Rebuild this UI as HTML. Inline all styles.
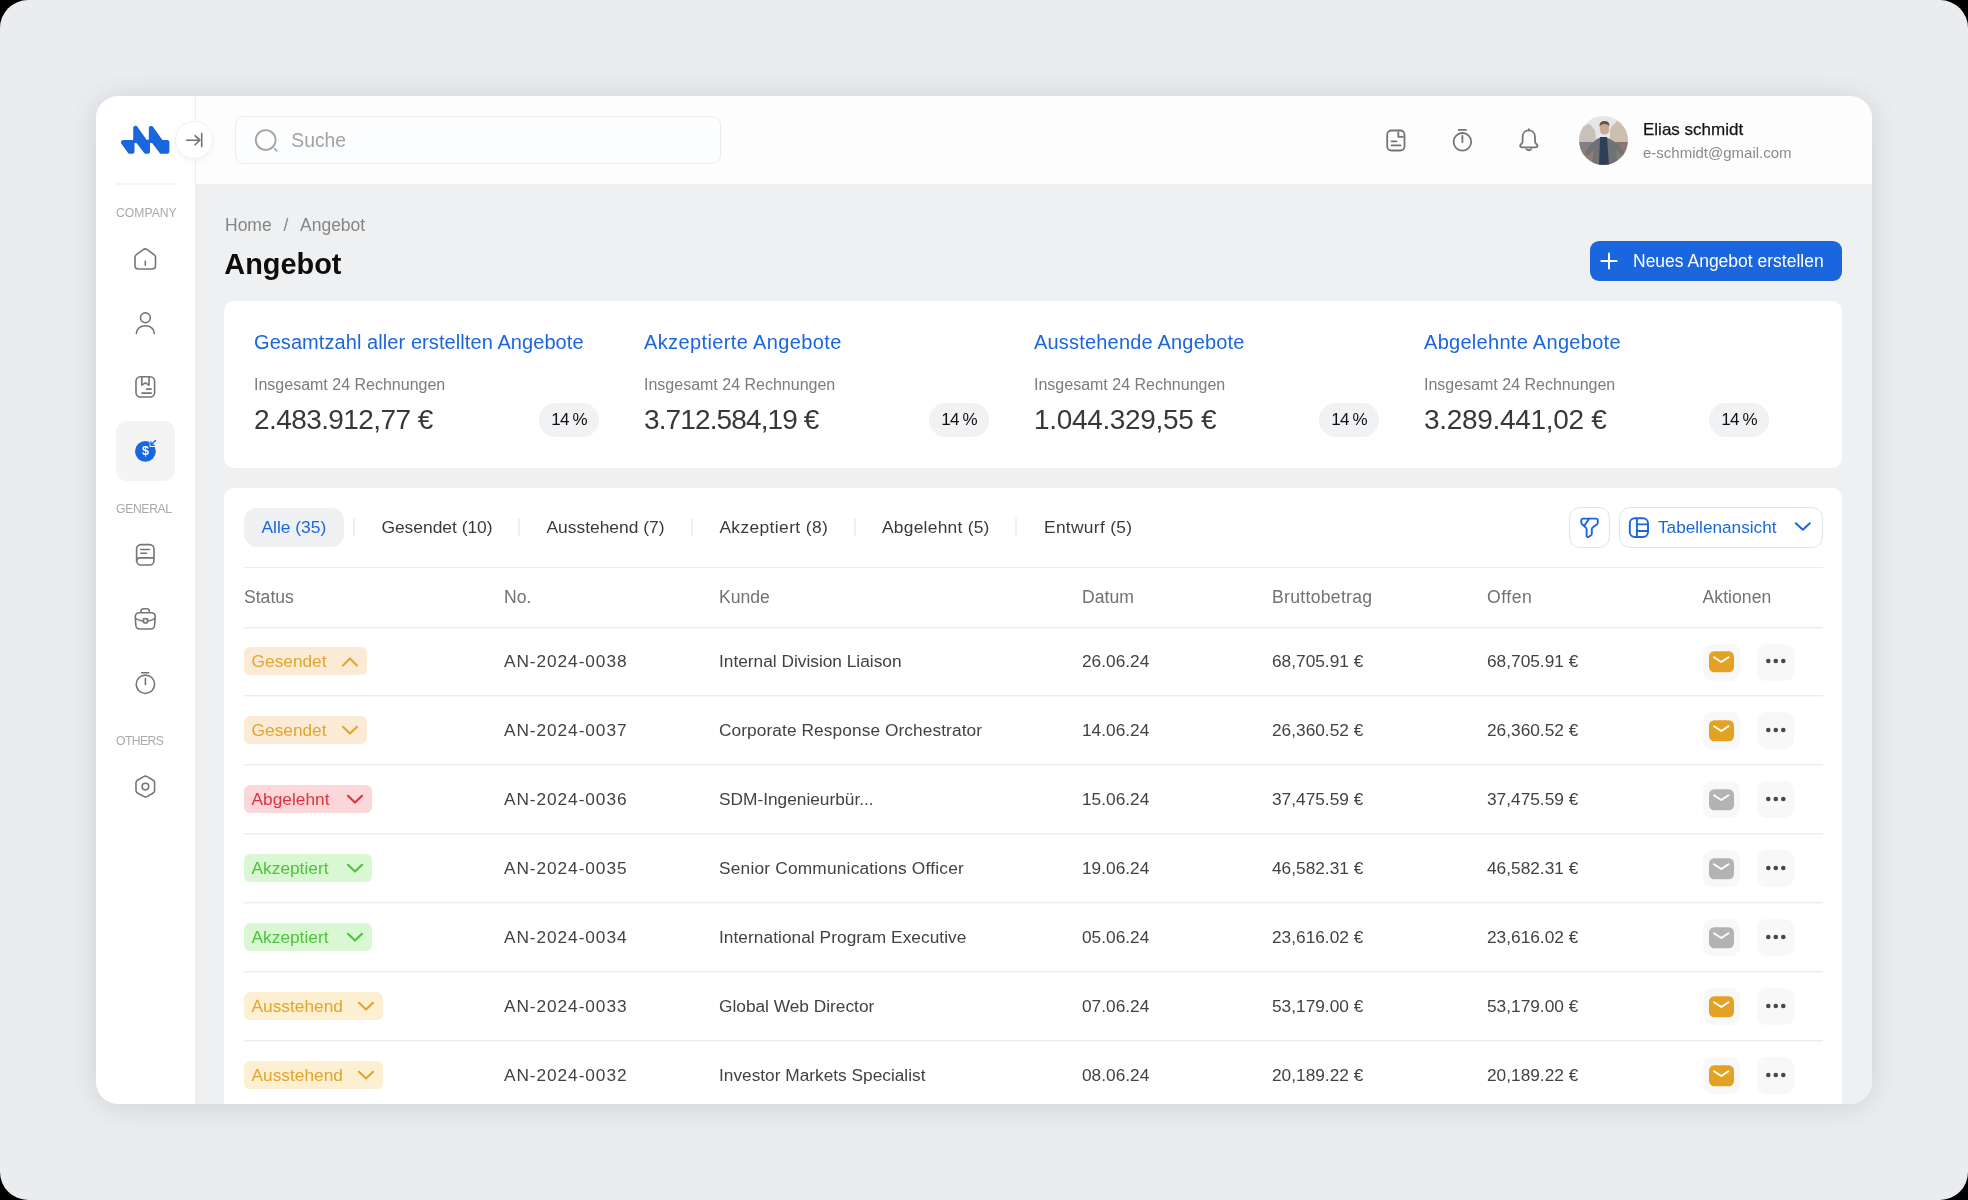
<!DOCTYPE html>
<html><head><meta charset="utf-8"><style>
html,body{margin:0;padding:0;width:1968px;height:1200px;overflow:hidden;background:#000;}
#frame{position:absolute;left:0;top:0;width:1968px;height:1200px;border-radius:28px;background:#ebecef;overflow:hidden;}
#card{position:absolute;left:96px;top:96px;width:1776px;height:1008px;border-radius:22px;overflow:hidden;box-shadow:0 0 28px rgba(20,25,40,0.07),0 6px 40px rgba(20,25,40,0.05);}
#clip{position:absolute;left:96px;top:96px;width:1776px;height:1008px;border-radius:22px;overflow:hidden;}
#inner{will-change:transform;position:absolute;left:-96px;top:-96px;width:1968px;height:1200px;}
.t{position:absolute;white-space:nowrap;line-height:1;font-family:"Liberation Sans", sans-serif;}
</style></head><body><div id="frame">
<div id="card"><div style="position:absolute;left:0px;top:0px;width:99px;height:1008px;background:#ffffff;"></div><div style="position:absolute;left:99px;top:0px;width:1677px;height:88px;background:#fdfdfe;"></div><div style="position:absolute;left:99px;top:88px;width:1677px;height:920px;background:#eff0f2;"></div><div style="position:absolute;left:99px;top:0px;width:1px;height:1008px;background:#eeeff1;"></div></div>
<div id="clip"><div id="inner">
<svg style="position:absolute;left:116px;top:120px" width="60" height="40" viewBox="0 0 60 40" fill="none"><path d="M7.27 20.00L6.34 20.19L5.63 20.67L5.34 21.02L5.13 21.43L4.99 21.92L5.01 22.77L5.14 23.21L5.39 23.64L11.90 32.82L12.52 33.42L13.32 33.75L16.19 33.80L16.68 33.75L17.50 33.39L18.13 32.75L18.45 31.98L18.50 31.49L18.50 23.57L18.55 23.33L18.70 23.13L18.91 23.00L19.16 22.98L20.21 23.00L20.47 23.06L20.68 23.23L28.20 32.90L28.81 33.45L29.58 33.75L31.69 33.80L32.55 33.63L33.30 33.15L33.81 32.41L34.00 31.49L34.00 23.57L34.05 23.33L34.20 23.13L34.41 23.00L34.66 22.97L35.80 23.00L36.07 23.06L36.28 23.24L43.50 32.87L43.82 33.21L44.49 33.63L45.36 33.80L51.52 33.76L52.01 33.61L52.70 33.15L53.03 32.75L53.35 31.98L53.40 31.49L53.40 22.31L53.23 21.45L52.99 21.00L52.35 20.37L51.52 20.04L46.71 20.00L46.43 19.93L46.22 19.75L36.98 6.81L36.35 6.21L35.53 5.88L34.64 5.89L33.82 6.23L33.20 6.85L32.85 7.67L32.80 19.23L32.75 19.47L32.60 19.67L32.39 19.80L30.91 19.80L30.64 19.73L30.42 19.55L21.37 6.68L20.71 6.07L20.31 5.87L19.50 5.72L18.62 5.89L17.88 6.39L17.39 7.12L17.24 7.60L17.20 19.43L17.15 19.67L17.00 19.87L16.79 20.00L16.54 20.02L7.27 20.00Z" fill="#1a66de"/></svg><div style="position:absolute;left:116px;top:183px;width:59px;height:2px;background:#f4f5f7;"></div><div style="position:absolute;left:175.3px;top:121.2px;width:38px;height:38px;border-radius:50%;background:#fff;border:1px solid #f0f0f2;box-shadow:0 2px 6px rgba(0,0,0,0.05);box-sizing:border-box"></div><svg style="position:absolute;left:182px;top:128px" width="24" height="24" viewBox="0 0 24 24" fill="none"><path d="M4.6 12.2 H17.8 M13.1 7.7 L17.8 12.2 L13.1 16.8 M19.7 5.6 V18.6" stroke="#707070" stroke-width="1.6" stroke-linecap="round" stroke-linejoin="round"/></svg><div style="position:absolute;left:235px;top:116px;width:486px;height:48px;border-radius:9px;border:1px solid #ebecee;background:#fcfdfe;box-sizing:border-box"></div><svg style="position:absolute;left:254px;top:128px" width="26" height="26" viewBox="0 0 26 26" fill="none"><circle cx="11.7" cy="12.0" r="9.9" stroke="#a4a4a4" stroke-width="1.8"/><path d="M20.6 20.9 L22.6 22.8" stroke="#a4a4a4" stroke-width="1.8" stroke-linecap="round"/></svg><div class="t" style="left:291.3px;top:130.56px;font-size:19.3px;color:#a3a3a3;font-weight:normal;">Suche</div><svg style="position:absolute;left:1380px;top:124px" width="32" height="32" viewBox="0 0 32 32" fill="none"><rect x="7.2" y="6.5" width="17.3" height="20" rx="4.2" stroke="#757575" stroke-width="1.8"/><path d="M18.3 8.2 V12.8 H22.9 M11.5 17.3 H16.5 M11.5 21.4 H20.6" stroke="#757575" stroke-width="1.8" stroke-linecap="round" stroke-linejoin="round"/></svg><svg style="position:absolute;left:1446px;top:124px" width="32" height="32" viewBox="0 0 32 32" fill="none"><circle cx="16.4" cy="17.8" r="8.8" stroke="#757575" stroke-width="1.8"/><path d="M12.7 5.9 H20 M16.4 11.8 V18.2" stroke="#757575" stroke-width="1.8" stroke-linecap="round"/></svg><svg style="position:absolute;left:1513px;top:124px" width="32" height="32" viewBox="0 0 32 32" fill="none"><path d="M15.8 6.4 C11.9 6.4 9.6 9.4 9.6 13.1 V17.4 C9.6 19 8.3 19.9 7.5 20.9 C6.7 21.9 7.3 23.3 8.7 23.3 H22.9 C24.3 23.3 24.9 21.9 24.1 20.9 C23.3 19.9 22 19 22 17.4 V13.1 C22 9.4 19.7 6.4 15.8 6.4 Z" stroke="#757575" stroke-width="1.8" stroke-linejoin="round"/><path d="M13.4 25.2 Q15.8 27.4 18.2 25.2 M15.8 5.2 V6.4" stroke="#757575" stroke-width="1.8" stroke-linecap="round"/></svg><svg style="position:absolute;left:1579px;top:116px" width="49" height="49" viewBox="0 0 49 49">
<defs><clipPath id="av"><circle cx="24.5" cy="24.5" r="24.5"/></clipPath><filter id="bl" x="-10%" y="-10%" width="120%" height="120%"><feGaussianBlur stdDeviation="0.6"/></filter></defs>
<g clip-path="url(#av)"><g filter="url(#bl)">
<rect x="0" y="0" width="49" height="49" fill="#e4e6e9"/>
<path d="M0 12 L6 10 L9 8 L12 9 L14 12 L16 14 L17 24 L17 30 L0 30 Z" fill="#c9c1b9"/>
<path d="M33 10 L38 5 L44 6 L49 8 L49 30 L31 30 L31 14 Z" fill="#cbc0ad"/>
<rect x="0" y="26" width="16" height="3" fill="#7c8088"/>
<rect x="34" y="26" width="15" height="4" fill="#8a7270"/>
<path d="M0 29 L16 29 L14 49 L0 49 Z" fill="#8b7d77"/>
<path d="M33 29 L49 29 L49 49 L35 49 Z" fill="#8a7b74"/>
<path d="M18 23 Q24 19 31 23 L39 28 L46 37 L44 40 L37 34 L39 49 L13 49 L15 34 L8 40 L6 37 L12 28 Z" fill="#6f7276"/>
<path d="M21 21 L28 21 L30 49 L20 49 Z" fill="#2f3f55"/>
<path d="M20.5 9.5 Q21 5.5 25.5 5.5 Q30 5.5 30 9.5 L30 15 Q29 18.5 25.5 18.5 Q22 18.5 21 15 Z" fill="#c9a896"/>
<path d="M20.5 10 Q20.5 5 25.5 5 Q30.5 5 30.5 10 Q28 7.8 25.5 8 Q23 7.8 20.5 10 Z" fill="#6a5240"/>
</g></g></svg><div class="t" style="left:1643px;top:121.21px;font-size:17px;color:#141414;font-weight:normal;-webkit-text-stroke:0.25px #141414;">Elias schmidt</div><div class="t" style="left:1643px;top:145.30px;font-size:15px;color:#8a8a8a;font-weight:normal;">e-schmidt@gmail.com</div><div class="t" style="left:116px;top:206.87px;font-size:12.2px;color:#aaaaaa;font-weight:normal;">COMPANY</div><div class="t" style="left:116px;top:503.07px;font-size:12.2px;color:#aaaaaa;font-weight:normal;letter-spacing:-0.35px;">GENERAL</div><div class="t" style="left:116px;top:734.87px;font-size:12.2px;color:#aaaaaa;font-weight:normal;letter-spacing:-0.6px;">OTHERS</div><svg style="position:absolute;left:130px;top:245px" width="30" height="30" viewBox="0 0 30 30" fill="none"><path d="M5 12.2 Q5 10.6 6.4 9.6 L13.2 4.6 Q15.2 3.2 17.2 4.6 L24 9.6 Q25.5 10.6 25.5 12.2 V20.5 Q25.5 24 22 24 H8.5 Q5 24 5 20.5 Z" stroke="#757575" stroke-width="1.6" stroke-linejoin="round"/><path d="M15.3 16.4 V20.2" stroke="#757575" stroke-width="1.6" stroke-linecap="round"/></svg><svg style="position:absolute;left:130px;top:308px" width="30" height="30" viewBox="0 0 30 30" fill="none"><circle cx="15.4" cy="9.8" r="4.9" stroke="#757575" stroke-width="1.6"/><path d="M6.4 25.6 C6.4 20.8 10.4 17.8 15.4 17.8 C20.4 17.8 24.2 20.8 24.2 25.6" stroke="#757575" stroke-width="1.6" stroke-linecap="round"/></svg><svg style="position:absolute;left:130px;top:372px" width="30" height="30" viewBox="0 0 30 30" fill="none"><rect x="6" y="4.8" width="18.6" height="20.2" rx="4.4" stroke="#757575" stroke-width="1.6"/><path d="M11.8 4.8 V13.2 L15.4 10.8 L19 13.2 V4.8" stroke="#757575" stroke-width="1.6" stroke-linejoin="round"/><path d="M16.6 17.1 H21.2 M11.9 21.1 H21.2" stroke="#757575" stroke-width="1.6" stroke-linecap="round"/></svg><div style="position:absolute;left:116px;top:421px;width:59px;height:60px;background:#f4f4f5;border-radius:11px;"></div><svg style="position:absolute;left:130px;top:436px" width="30" height="30" viewBox="0 0 30 30" fill="none"><circle cx="15.4" cy="15.3" r="10.4" fill="#1a66de"/><rect x="19.6" y="5.6" width="6" height="5.4" fill="#f4f4f5"/><path d="M25.5 4.6 L21.4 8.6 M21 6 V9.2 H24.2" stroke="#1a66de" stroke-width="1.4" stroke-linecap="round" stroke-linejoin="round"/><text x="15.5" y="19.0" text-anchor="middle" font-family="Liberation Sans" font-weight="bold" font-size="12.5" fill="#fff">$</text></svg><svg style="position:absolute;left:130px;top:540px" width="30" height="30" viewBox="0 0 30 30" fill="none"><rect x="6.6" y="4.6" width="17.4" height="20.4" rx="4.4" stroke="#757575" stroke-width="1.6"/><path d="M10.8 9.5 H19.5 M10.8 13.2 H16.5" stroke="#757575" stroke-width="1.6" stroke-linecap="round"/><path d="M6.6 21.5 Q6.6 17.9 10.2 17.9 H24" stroke="#757575" stroke-width="1.6"/></svg><svg style="position:absolute;left:130px;top:604px" width="30" height="30" viewBox="0 0 30 30" fill="none"><path d="M10.9 8.8 V7.6 Q10.9 4.8 13.7 4.8 H16.6 Q19.4 4.8 19.4 7.6 V8.8" stroke="#757575" stroke-width="1.6"/><path d="M9.5 8.8 H21 Q25.2 8.8 25.2 13 L24.6 21 Q24.4 25 20.4 25 H10 Q6 25 5.8 21 L5.3 13 Q5.3 8.8 9.5 8.8 Z" stroke="#757575" stroke-width="1.6" stroke-linejoin="round"/><path d="M5.6 14.6 Q9 16.2 13.4 17.2 M17.4 17.2 Q21.8 16.2 25 14.6" stroke="#757575" stroke-width="1.6" stroke-linecap="round"/><path d="M13.5 14.7 H17.5 V17.4 Q17.5 19 15.5 19 Q13.5 19 13.5 17.4 Z" stroke="#757575" stroke-width="1.6" stroke-linejoin="round"/></svg><svg style="position:absolute;left:130px;top:668px" width="30" height="30" viewBox="0 0 30 30" fill="none"><circle cx="15.4" cy="16.3" r="9.2" stroke="#757575" stroke-width="1.6"/><path d="M11.6 4.8 H18.7 M15.4 10.6 V16.4" stroke="#757575" stroke-width="1.6" stroke-linecap="round"/></svg><svg style="position:absolute;left:130px;top:771px" width="30" height="30" viewBox="0 0 30 30" fill="none"><path d="M13.6 5.6 Q15.4 4.6 17.2 5.6 L23.2 9.2 Q24.6 10 24.6 11.8 V19.6 Q24.6 21.2 23.2 22 L17.2 25.4 Q15.4 26.4 13.6 25.4 L7.4 22 Q6 21.2 6 19.6 V11.8 Q6 10 7.4 9.2 Z" stroke="#757575" stroke-width="1.6" stroke-linejoin="round"/><circle cx="15.4" cy="15.6" r="3.3" stroke="#757575" stroke-width="1.6"/></svg><div class="t" style="left:225px;top:217.19px;font-size:17.5px;color:#858585;font-weight:normal;">Home</div><div class="t" style="left:283.5px;top:217.19px;font-size:17.5px;color:#858585;font-weight:normal;">/</div><div class="t" style="left:300px;top:217.19px;font-size:17.5px;color:#858585;font-weight:normal;">Angebot</div><div class="t" style="left:224.3px;top:249.54px;font-size:28.9px;color:#0d0d0d;font-weight:bold;">Angebot</div><div style="position:absolute;left:1590px;top:241px;width:252px;height:40px;background:#1a66de;border-radius:9px;"></div><svg style="position:absolute;left:1599px;top:251px" width="20" height="20" viewBox="0 0 20 20" fill="none"><path d="M10 2.4 V17.6 M2.4 10 H17.6" stroke="#fff" stroke-width="2" stroke-linecap="round"/></svg><div class="t" style="left:1633px;top:253.19px;font-size:17.5px;color:#ffffff;font-weight:normal;">Neues Angebot erstellen</div><div style="position:absolute;left:224px;top:301px;width:1618px;height:167px;background:#fff;border-radius:10px;"></div><div class="t" style="left:254px;top:331.87px;font-size:20px;color:#1a66de;font-weight:normal;letter-spacing:0.077px;">Gesamtzahl aller erstellten Angebote</div><div class="t" style="left:254px;top:377.06px;font-size:16px;color:#7c7c7c;font-weight:normal;">Insgesamt 24 Rechnungen</div><div class="t" style="left:254px;top:405.50px;font-size:28px;color:#383838;font-weight:normal;letter-spacing:-0.58px;">2.483.912,77 €</div><div style="position:absolute;left:539px;top:403px;width:60px;height:34px;background:#f1f2f4;border-radius:17px;"></div><div class="t" style="left:551.3px;top:411.01px;font-size:17px;color:#111111;font-weight:normal;letter-spacing:-0.85px;">14 %</div><div class="t" style="left:644px;top:331.87px;font-size:20px;color:#1a66de;font-weight:normal;letter-spacing:0.38px;">Akzeptierte Angebote</div><div class="t" style="left:644px;top:377.06px;font-size:16px;color:#7c7c7c;font-weight:normal;">Insgesamt 24 Rechnungen</div><div class="t" style="left:644px;top:405.50px;font-size:28px;color:#383838;font-weight:normal;letter-spacing:-0.88px;">3.712.584,19 €</div><div style="position:absolute;left:929px;top:403px;width:60px;height:34px;background:#f1f2f4;border-radius:17px;"></div><div class="t" style="left:941.3px;top:411.01px;font-size:17px;color:#111111;font-weight:normal;letter-spacing:-0.85px;">14 %</div><div class="t" style="left:1034px;top:331.87px;font-size:20px;color:#1a66de;font-weight:normal;letter-spacing:0.19px;">Ausstehende Angebote</div><div class="t" style="left:1034px;top:377.06px;font-size:16px;color:#7c7c7c;font-weight:normal;">Insgesamt 24 Rechnungen</div><div class="t" style="left:1034px;top:405.50px;font-size:28px;color:#383838;font-weight:normal;letter-spacing:-0.33px;">1.044.329,55 €</div><div style="position:absolute;left:1319px;top:403px;width:60px;height:34px;background:#f1f2f4;border-radius:17px;"></div><div class="t" style="left:1331.3px;top:411.01px;font-size:17px;color:#111111;font-weight:normal;letter-spacing:-0.85px;">14 %</div><div class="t" style="left:1424px;top:331.87px;font-size:20px;color:#1a66de;font-weight:normal;letter-spacing:0.29px;">Abgelehnte Angebote</div><div class="t" style="left:1424px;top:377.06px;font-size:16px;color:#7c7c7c;font-weight:normal;">Insgesamt 24 Rechnungen</div><div class="t" style="left:1424px;top:405.50px;font-size:28px;color:#383838;font-weight:normal;letter-spacing:-0.3px;">3.289.441,02 €</div><div style="position:absolute;left:1709px;top:403px;width:60px;height:34px;background:#f1f2f4;border-radius:17px;"></div><div class="t" style="left:1721.3px;top:411.01px;font-size:17px;color:#111111;font-weight:normal;letter-spacing:-0.85px;">14 %</div><div style="position:absolute;left:224px;top:488px;width:1618px;height:700px;background:#fff;border-radius:10px;"></div><div style="position:absolute;left:244px;top:508px;width:100px;height:39px;background:#eff0f2;border-radius:13px;"></div><div class="t" style="left:261.5px;top:519.27px;font-size:17.4px;color:#1a66de;font-weight:normal;letter-spacing:0px;">Alle (35)</div><div class="t" style="left:381.4px;top:519.27px;font-size:17.4px;color:#3a3a3a;font-weight:normal;letter-spacing:0px;">Gesendet (10)</div><div class="t" style="left:546.5px;top:519.27px;font-size:17.4px;color:#3a3a3a;font-weight:normal;letter-spacing:0px;">Ausstehend (7)</div><div class="t" style="left:719.4px;top:519.27px;font-size:17.4px;color:#3a3a3a;font-weight:normal;letter-spacing:0.38px;">Akzeptiert (8)</div><div class="t" style="left:882px;top:519.27px;font-size:17.4px;color:#3a3a3a;font-weight:normal;letter-spacing:0.25px;">Abgelehnt (5)</div><div class="t" style="left:1044px;top:519.27px;font-size:17.4px;color:#3a3a3a;font-weight:normal;letter-spacing:0.3px;">Entwurf (5)</div><div style="position:absolute;left:353px;top:518px;width:2px;height:18px;background:#efeff1;"></div><div style="position:absolute;left:518px;top:518px;width:2px;height:18px;background:#efeff1;"></div><div style="position:absolute;left:691px;top:518px;width:2px;height:18px;background:#efeff1;"></div><div style="position:absolute;left:854px;top:518px;width:2px;height:18px;background:#efeff1;"></div><div style="position:absolute;left:1015px;top:518px;width:2px;height:18px;background:#efeff1;"></div><div style="position:absolute;left:1569px;top:507px;width:41px;height:41px;border:1px solid #e3e3e6;border-radius:11px;box-sizing:border-box;background:#fff;"></div><svg style="position:absolute;left:1574px;top:512px" width="30" height="30" viewBox="0 0 30 30" fill="none"><path d="M9.2 6.6 H21.8 Q23.8 6.6 23.8 8.6 V10.4 Q23.8 11.6 22.8 12.4 L18.6 15.6 Q17.8 16.3 17.8 17.4 V21.6 Q17.8 22.8 16.8 23.5 L14.8 24.8 Q12.6 25.8 12.6 23.2 V17.6 Q12.6 16.4 11.8 15.6 L8.2 12.2 Q7.3 11.4 7.3 10.2 V8.6 Q7.3 6.6 9.2 6.6 Z M14.8 6.9 L10.6 13.6" stroke="#1a66de" stroke-width="1.9" stroke-linejoin="round" stroke-linecap="round"/></svg><div style="position:absolute;left:1619px;top:507px;width:204px;height:41px;border:1px solid #e3e3e6;border-radius:11px;box-sizing:border-box;background:#fff;"></div><svg style="position:absolute;left:1624px;top:512px" width="30" height="30" viewBox="0 0 30 30" fill="none"><rect x="5.8" y="6.3" width="18.2" height="18.7" rx="5" stroke="#1a66de" stroke-width="1.9"/><path d="M12.9 6.3 V25 M12.9 12.4 H24 M12.9 19 H24" stroke="#1a66de" stroke-width="1.9"/></svg><div class="t" style="left:1658px;top:519.44px;font-size:17.2px;color:#1a66de;font-weight:normal;">Tabellenansicht</div><svg style="position:absolute;left:1791px;top:517px" width="24" height="20" viewBox="0 0 24 20" fill="none"><path d="M4.8 6.2 L11.8 12.8 L18.8 6.2" stroke="#1a66de" stroke-width="2" stroke-linecap="round" stroke-linejoin="round"/></svg><div style="position:absolute;left:244px;top:567px;width:1579px;height:1px;background:#ecedf0;"></div><div style="position:absolute;left:244px;top:627px;width:1579px;height:1px;background:#ecedf0;"></div><div style="position:absolute;left:244px;top:628px;width:1579px;height:1px;background:#f6f7f8;"></div><div class="t" style="left:244px;top:588.60px;font-size:17.6px;color:#727272;font-weight:normal;letter-spacing:0px;">Status</div><div class="t" style="left:504px;top:588.60px;font-size:17.6px;color:#727272;font-weight:normal;letter-spacing:0px;">No.</div><div class="t" style="left:719px;top:588.60px;font-size:17.6px;color:#727272;font-weight:normal;letter-spacing:0px;">Kunde</div><div class="t" style="left:1082px;top:588.60px;font-size:17.6px;color:#727272;font-weight:normal;letter-spacing:0px;">Datum</div><div class="t" style="left:1272px;top:588.60px;font-size:17.6px;color:#727272;font-weight:normal;letter-spacing:0.3px;">Bruttobetrag</div><div class="t" style="left:1487px;top:588.60px;font-size:17.6px;color:#727272;font-weight:normal;letter-spacing:0.5px;">Offen</div><div class="t" style="left:1702.5px;top:588.60px;font-size:17.6px;color:#727272;font-weight:normal;letter-spacing:0.05px;">Aktionen</div><div style="position:absolute;left:244px;top:647px;width:123px;height:28px;background:#fbebd6;border-radius:6px;"></div><div class="t" style="left:251.6px;top:653.06px;font-size:17.3px;color:#e3a42c;font-weight:normal;">Gesendet</div><svg style="position:absolute;left:340px;top:651.5px" width="20" height="20" viewBox="0 0 20 20" fill="none"><path d="M3 13.5 L10 6.5 L17 13.5" stroke="#e3a42c" stroke-width="2.1" stroke-linecap="round" stroke-linejoin="round"/></svg><div class="t" style="left:504px;top:653.06px;font-size:17.3px;color:#424242;font-weight:normal;letter-spacing:0.92px;">AN-2024-0038</div><div class="t" style="left:719px;top:653.06px;font-size:17.3px;color:#424242;font-weight:normal;letter-spacing:0px;">Internal Division Liaison</div><div class="t" style="left:1082px;top:653.06px;font-size:17.3px;color:#424242;font-weight:normal;">26.06.24</div><div class="t" style="left:1272px;top:653.06px;font-size:17.3px;color:#424242;font-weight:normal;">68,705.91 €</div><div class="t" style="left:1487px;top:653.06px;font-size:17.3px;color:#424242;font-weight:normal;">68,705.91 €</div><div style="position:absolute;left:1703px;top:644px;width:37px;height:37px;background:#f8f8f9;border-radius:9px;"></div><svg style="position:absolute;left:1709px;top:651px" width="25" height="22" viewBox="0 0 25 22" fill="none"><rect x="0" y="0.3" width="25" height="21" rx="5.2" fill="#e3a224"/><path d="M5.0 6.3 L12.3 11.0 L19.5 6.3" stroke="#fff" stroke-width="1.9" stroke-linecap="round" stroke-linejoin="round"/></svg><div style="position:absolute;left:1757px;top:644px;width:37px;height:37px;background:#f8f8f9;border-radius:9px;"></div><svg style="position:absolute;left:1762px;top:656px" width="28" height="10" viewBox="0 0 28 10" fill="none"><circle cx="6.3" cy="5" r="2.3" fill="#474747"/><circle cx="13.8" cy="5" r="2.3" fill="#474747"/><circle cx="21.3" cy="5" r="2.3" fill="#474747"/></svg><div style="position:absolute;left:244px;top:695px;width:1579px;height:1px;background:#ecedf0;"></div><div style="position:absolute;left:244px;top:696px;width:1579px;height:1px;background:#f6f7f8;"></div><div style="position:absolute;left:244px;top:716px;width:123px;height:28px;background:#fbebd6;border-radius:6px;"></div><div class="t" style="left:251.6px;top:721.56px;font-size:17.3px;color:#e3a42c;font-weight:normal;">Gesendet</div><svg style="position:absolute;left:340px;top:720px" width="20" height="20" viewBox="0 0 20 20" fill="none"><path d="M3 6.8 L10 13.4 L17 6.8" stroke="#e3a42c" stroke-width="2.1" stroke-linecap="round" stroke-linejoin="round"/></svg><div class="t" style="left:504px;top:721.56px;font-size:17.3px;color:#424242;font-weight:normal;letter-spacing:0.92px;">AN-2024-0037</div><div class="t" style="left:719px;top:721.56px;font-size:17.3px;color:#424242;font-weight:normal;letter-spacing:0.09px;">Corporate Response Orchestrator</div><div class="t" style="left:1082px;top:721.56px;font-size:17.3px;color:#424242;font-weight:normal;">14.06.24</div><div class="t" style="left:1272px;top:721.56px;font-size:17.3px;color:#424242;font-weight:normal;">26,360.52 €</div><div class="t" style="left:1487px;top:721.56px;font-size:17.3px;color:#424242;font-weight:normal;">26,360.52 €</div><div style="position:absolute;left:1703px;top:712px;width:37px;height:37px;background:#f8f8f9;border-radius:9px;"></div><svg style="position:absolute;left:1709px;top:720px" width="25" height="22" viewBox="0 0 25 22" fill="none"><rect x="0" y="0.3" width="25" height="21" rx="5.2" fill="#e3a224"/><path d="M5.0 6.3 L12.3 11.0 L19.5 6.3" stroke="#fff" stroke-width="1.9" stroke-linecap="round" stroke-linejoin="round"/></svg><div style="position:absolute;left:1757px;top:712px;width:37px;height:37px;background:#f8f8f9;border-radius:9px;"></div><svg style="position:absolute;left:1762px;top:725px" width="28" height="10" viewBox="0 0 28 10" fill="none"><circle cx="6.3" cy="5" r="2.3" fill="#474747"/><circle cx="13.8" cy="5" r="2.3" fill="#474747"/><circle cx="21.3" cy="5" r="2.3" fill="#474747"/></svg><div style="position:absolute;left:244px;top:764px;width:1579px;height:1px;background:#ecedf0;"></div><div style="position:absolute;left:244px;top:765px;width:1579px;height:1px;background:#f6f7f8;"></div><div style="position:absolute;left:244px;top:785px;width:128px;height:28px;background:#fbd7da;border-radius:6px;"></div><div class="t" style="left:251.6px;top:790.56px;font-size:17.3px;color:#e0313c;font-weight:normal;">Abgelehnt</div><svg style="position:absolute;left:345px;top:789px" width="20" height="20" viewBox="0 0 20 20" fill="none"><path d="M3 6.8 L10 13.4 L17 6.8" stroke="#e0313c" stroke-width="2.1" stroke-linecap="round" stroke-linejoin="round"/></svg><div class="t" style="left:504px;top:790.56px;font-size:17.3px;color:#424242;font-weight:normal;letter-spacing:0.92px;">AN-2024-0036</div><div class="t" style="left:719px;top:790.56px;font-size:17.3px;color:#424242;font-weight:normal;letter-spacing:0px;">SDM-Ingenieurbür...</div><div class="t" style="left:1082px;top:790.56px;font-size:17.3px;color:#424242;font-weight:normal;">15.06.24</div><div class="t" style="left:1272px;top:790.56px;font-size:17.3px;color:#424242;font-weight:normal;">37,475.59 €</div><div class="t" style="left:1487px;top:790.56px;font-size:17.3px;color:#424242;font-weight:normal;">37,475.59 €</div><div style="position:absolute;left:1703px;top:781px;width:37px;height:37px;background:#f8f8f9;border-radius:9px;"></div><svg style="position:absolute;left:1709px;top:789px" width="25" height="22" viewBox="0 0 25 22" fill="none"><rect x="0" y="0.3" width="25" height="21" rx="5.2" fill="#b3b3b3"/><path d="M5.0 6.3 L12.3 11.0 L19.5 6.3" stroke="#fff" stroke-width="1.9" stroke-linecap="round" stroke-linejoin="round"/></svg><div style="position:absolute;left:1757px;top:781px;width:37px;height:37px;background:#f8f8f9;border-radius:9px;"></div><svg style="position:absolute;left:1762px;top:794px" width="28" height="10" viewBox="0 0 28 10" fill="none"><circle cx="6.3" cy="5" r="2.3" fill="#474747"/><circle cx="13.8" cy="5" r="2.3" fill="#474747"/><circle cx="21.3" cy="5" r="2.3" fill="#474747"/></svg><div style="position:absolute;left:244px;top:833px;width:1579px;height:1px;background:#ecedf0;"></div><div style="position:absolute;left:244px;top:834px;width:1579px;height:1px;background:#f6f7f8;"></div><div style="position:absolute;left:244px;top:854px;width:128px;height:28px;background:#d9f7d3;border-radius:6px;"></div><div class="t" style="left:251.6px;top:859.56px;font-size:17.3px;color:#4cc43a;font-weight:normal;">Akzeptiert</div><svg style="position:absolute;left:345px;top:858px" width="20" height="20" viewBox="0 0 20 20" fill="none"><path d="M3 6.8 L10 13.4 L17 6.8" stroke="#4cc43a" stroke-width="2.1" stroke-linecap="round" stroke-linejoin="round"/></svg><div class="t" style="left:504px;top:859.56px;font-size:17.3px;color:#424242;font-weight:normal;letter-spacing:0.92px;">AN-2024-0035</div><div class="t" style="left:719px;top:859.56px;font-size:17.3px;color:#424242;font-weight:normal;letter-spacing:0.21px;">Senior Communications Officer</div><div class="t" style="left:1082px;top:859.56px;font-size:17.3px;color:#424242;font-weight:normal;">19.06.24</div><div class="t" style="left:1272px;top:859.56px;font-size:17.3px;color:#424242;font-weight:normal;">46,582.31 €</div><div class="t" style="left:1487px;top:859.56px;font-size:17.3px;color:#424242;font-weight:normal;">46,582.31 €</div><div style="position:absolute;left:1703px;top:850px;width:37px;height:37px;background:#f8f8f9;border-radius:9px;"></div><svg style="position:absolute;left:1709px;top:858px" width="25" height="22" viewBox="0 0 25 22" fill="none"><rect x="0" y="0.3" width="25" height="21" rx="5.2" fill="#b3b3b3"/><path d="M5.0 6.3 L12.3 11.0 L19.5 6.3" stroke="#fff" stroke-width="1.9" stroke-linecap="round" stroke-linejoin="round"/></svg><div style="position:absolute;left:1757px;top:850px;width:37px;height:37px;background:#f8f8f9;border-radius:9px;"></div><svg style="position:absolute;left:1762px;top:863px" width="28" height="10" viewBox="0 0 28 10" fill="none"><circle cx="6.3" cy="5" r="2.3" fill="#474747"/><circle cx="13.8" cy="5" r="2.3" fill="#474747"/><circle cx="21.3" cy="5" r="2.3" fill="#474747"/></svg><div style="position:absolute;left:244px;top:902px;width:1579px;height:1px;background:#ecedf0;"></div><div style="position:absolute;left:244px;top:903px;width:1579px;height:1px;background:#f6f7f8;"></div><div style="position:absolute;left:244px;top:923px;width:128px;height:28px;background:#d9f7d3;border-radius:6px;"></div><div class="t" style="left:251.6px;top:928.56px;font-size:17.3px;color:#4cc43a;font-weight:normal;">Akzeptiert</div><svg style="position:absolute;left:345px;top:927px" width="20" height="20" viewBox="0 0 20 20" fill="none"><path d="M3 6.8 L10 13.4 L17 6.8" stroke="#4cc43a" stroke-width="2.1" stroke-linecap="round" stroke-linejoin="round"/></svg><div class="t" style="left:504px;top:928.56px;font-size:17.3px;color:#424242;font-weight:normal;letter-spacing:0.92px;">AN-2024-0034</div><div class="t" style="left:719px;top:928.56px;font-size:17.3px;color:#424242;font-weight:normal;letter-spacing:0.05px;">International Program Executive</div><div class="t" style="left:1082px;top:928.56px;font-size:17.3px;color:#424242;font-weight:normal;">05.06.24</div><div class="t" style="left:1272px;top:928.56px;font-size:17.3px;color:#424242;font-weight:normal;">23,616.02 €</div><div class="t" style="left:1487px;top:928.56px;font-size:17.3px;color:#424242;font-weight:normal;">23,616.02 €</div><div style="position:absolute;left:1703px;top:919px;width:37px;height:37px;background:#f8f8f9;border-radius:9px;"></div><svg style="position:absolute;left:1709px;top:927px" width="25" height="22" viewBox="0 0 25 22" fill="none"><rect x="0" y="0.3" width="25" height="21" rx="5.2" fill="#b3b3b3"/><path d="M5.0 6.3 L12.3 11.0 L19.5 6.3" stroke="#fff" stroke-width="1.9" stroke-linecap="round" stroke-linejoin="round"/></svg><div style="position:absolute;left:1757px;top:919px;width:37px;height:37px;background:#f8f8f9;border-radius:9px;"></div><svg style="position:absolute;left:1762px;top:932px" width="28" height="10" viewBox="0 0 28 10" fill="none"><circle cx="6.3" cy="5" r="2.3" fill="#474747"/><circle cx="13.8" cy="5" r="2.3" fill="#474747"/><circle cx="21.3" cy="5" r="2.3" fill="#474747"/></svg><div style="position:absolute;left:244px;top:971px;width:1579px;height:1px;background:#ecedf0;"></div><div style="position:absolute;left:244px;top:972px;width:1579px;height:1px;background:#f6f7f8;"></div><div style="position:absolute;left:244px;top:992px;width:139px;height:28px;background:#fcefd2;border-radius:6px;"></div><div class="t" style="left:251.6px;top:997.56px;font-size:17.3px;color:#e3a42c;font-weight:normal;">Ausstehend</div><svg style="position:absolute;left:356px;top:996px" width="20" height="20" viewBox="0 0 20 20" fill="none"><path d="M3 6.8 L10 13.4 L17 6.8" stroke="#e3a42c" stroke-width="2.1" stroke-linecap="round" stroke-linejoin="round"/></svg><div class="t" style="left:504px;top:997.56px;font-size:17.3px;color:#424242;font-weight:normal;letter-spacing:0.92px;">AN-2024-0033</div><div class="t" style="left:719px;top:997.56px;font-size:17.3px;color:#424242;font-weight:normal;letter-spacing:0px;">Global Web Director</div><div class="t" style="left:1082px;top:997.56px;font-size:17.3px;color:#424242;font-weight:normal;">07.06.24</div><div class="t" style="left:1272px;top:997.56px;font-size:17.3px;color:#424242;font-weight:normal;">53,179.00 €</div><div class="t" style="left:1487px;top:997.56px;font-size:17.3px;color:#424242;font-weight:normal;">53,179.00 €</div><div style="position:absolute;left:1703px;top:988px;width:37px;height:37px;background:#f8f8f9;border-radius:9px;"></div><svg style="position:absolute;left:1709px;top:996px" width="25" height="22" viewBox="0 0 25 22" fill="none"><rect x="0" y="0.3" width="25" height="21" rx="5.2" fill="#e3a224"/><path d="M5.0 6.3 L12.3 11.0 L19.5 6.3" stroke="#fff" stroke-width="1.9" stroke-linecap="round" stroke-linejoin="round"/></svg><div style="position:absolute;left:1757px;top:988px;width:37px;height:37px;background:#f8f8f9;border-radius:9px;"></div><svg style="position:absolute;left:1762px;top:1001px" width="28" height="10" viewBox="0 0 28 10" fill="none"><circle cx="6.3" cy="5" r="2.3" fill="#474747"/><circle cx="13.8" cy="5" r="2.3" fill="#474747"/><circle cx="21.3" cy="5" r="2.3" fill="#474747"/></svg><div style="position:absolute;left:244px;top:1040px;width:1579px;height:1px;background:#ecedf0;"></div><div style="position:absolute;left:244px;top:1041px;width:1579px;height:1px;background:#f6f7f8;"></div><div style="position:absolute;left:244px;top:1061px;width:139px;height:28px;background:#fcefd2;border-radius:6px;"></div><div class="t" style="left:251.6px;top:1066.56px;font-size:17.3px;color:#e3a42c;font-weight:normal;">Ausstehend</div><svg style="position:absolute;left:356px;top:1065px" width="20" height="20" viewBox="0 0 20 20" fill="none"><path d="M3 6.8 L10 13.4 L17 6.8" stroke="#e3a42c" stroke-width="2.1" stroke-linecap="round" stroke-linejoin="round"/></svg><div class="t" style="left:504px;top:1066.56px;font-size:17.3px;color:#424242;font-weight:normal;letter-spacing:0.92px;">AN-2024-0032</div><div class="t" style="left:719px;top:1066.56px;font-size:17.3px;color:#424242;font-weight:normal;letter-spacing:0px;">Investor Markets Specialist</div><div class="t" style="left:1082px;top:1066.56px;font-size:17.3px;color:#424242;font-weight:normal;">08.06.24</div><div class="t" style="left:1272px;top:1066.56px;font-size:17.3px;color:#424242;font-weight:normal;">20,189.22 €</div><div class="t" style="left:1487px;top:1066.56px;font-size:17.3px;color:#424242;font-weight:normal;">20,189.22 €</div><div style="position:absolute;left:1703px;top:1057px;width:37px;height:37px;background:#f8f8f9;border-radius:9px;"></div><svg style="position:absolute;left:1709px;top:1065px" width="25" height="22" viewBox="0 0 25 22" fill="none"><rect x="0" y="0.3" width="25" height="21" rx="5.2" fill="#e3a224"/><path d="M5.0 6.3 L12.3 11.0 L19.5 6.3" stroke="#fff" stroke-width="1.9" stroke-linecap="round" stroke-linejoin="round"/></svg><div style="position:absolute;left:1757px;top:1057px;width:37px;height:37px;background:#f8f8f9;border-radius:9px;"></div><svg style="position:absolute;left:1762px;top:1070px" width="28" height="10" viewBox="0 0 28 10" fill="none"><circle cx="6.3" cy="5" r="2.3" fill="#474747"/><circle cx="13.8" cy="5" r="2.3" fill="#474747"/><circle cx="21.3" cy="5" r="2.3" fill="#474747"/></svg>
</div></div>
</div></body></html>
